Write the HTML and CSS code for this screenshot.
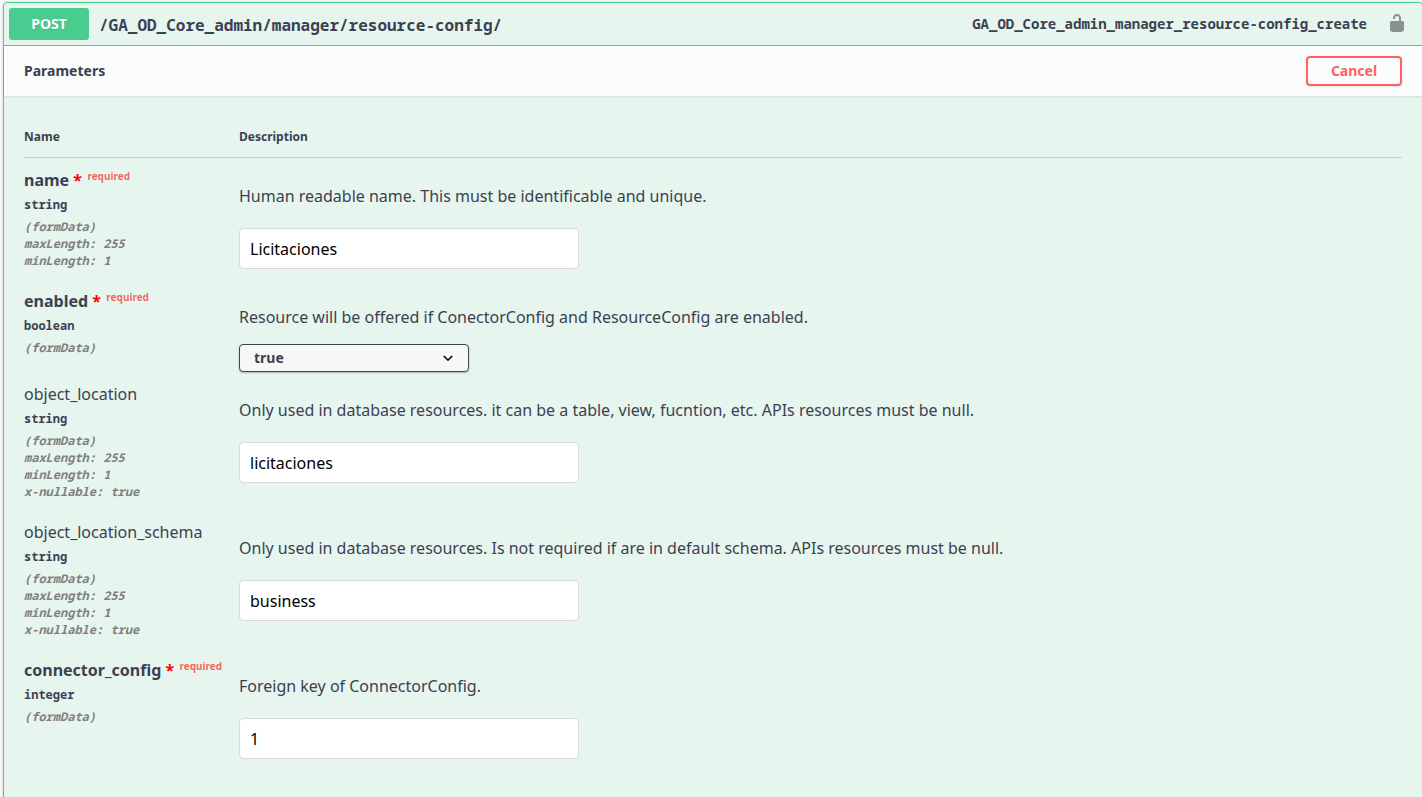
FILE: index.html
```html
<!DOCTYPE html>
<html lang="en">
<head>
<meta charset="utf-8">
<title>API operation</title>
<link rel="stylesheet" href="styles.css">
</head>
<body>
<main class="opblock">
  <header class="summary">
    <span class="method">POST</span>
    <span class="path">/GA_OD_Core_admin/manager/resource-config/</span>
    <span class="operation-id">GA_OD_Core_admin_manager_resource-config_create</span>
    <svg class="lock" viewBox="0 0 20 20" width="20" height="20"><path d="M15.8 8H14V5.6C14 2.703 12.665 1 10 1 7.334 1 6 2.703 6 5.6V6h2v-.801C8 3.754 8.797 3 10 3c1.203 0 2 .754 2 2.199V8H4c-.553 0-1 .646-1 1.199V17c0 .549.428 1.139.951 1.307l1.197.387C5.672 18.861 6.55 19 7.1 19h5.8c.549 0 1.428-.139 1.951-.307l1.196-.387c.524-.167.953-.757.953-1.306V9.199C17 8.646 16.352 8 15.8 8z"/></svg>
  </header>
  <div class="section-header">
    <h4 class="section-title">Parameters</h4>
    <button class="cancel">Cancel</button>
  </div>
  <section class="parameters">
    <div class="table-head"><span>Name</span><span>Description</span></div>

    <div class="row">
      <div class="meta">
        <div class="name required">name <span class="star">*</span><span class="flag">required</span></div>
        <div class="type">string</div>
        <div class="detail">(formData)</div>
        <div class="detail">maxLength: 255</div>
        <div class="detail">minLength: 1</div>
      </div>
      <div class="description">
        <p class="text">Human readable name. This must be identificable and unique.</p>
        <input class="field" type="text" value="Licitaciones">
      </div>
    </div>

    <div class="row row-select">
      <div class="meta">
        <div class="name required">enabled <span class="star">*</span><span class="flag">required</span></div>
        <div class="type">boolean</div>
        <div class="detail">(formData)</div>
      </div>
      <div class="description">
        <p class="text">Resource will be offered if ConectorConfig and ResourceConfig are enabled.</p>
        <div class="select"><span class="select-value">true</span><svg class="chevron" viewBox="0 0 20 20" width="20" height="20"><path d="M13.418 7.859a.695.695 0 0 1 .978 0 .68.68 0 0 1 0 .969l-3.908 3.83a.697.697 0 0 1-.979 0l-3.908-3.83a.68.68 0 0 1 0-.969.695.695 0 0 1 .978 0L10 11l3.418-3.141z"/></svg></div>
      </div>
    </div>

    <div class="row row-tall">
      <div class="meta">
        <div class="name">object_location</div>
        <div class="type">string</div>
        <div class="detail">(formData)</div>
        <div class="detail">maxLength: 255</div>
        <div class="detail">minLength: 1</div>
        <div class="detail">x-nullable: true</div>
      </div>
      <div class="description">
        <p class="text">Only used in database resources. it can be a table, view, fucntion, etc. APIs resources must be null.</p>
        <input class="field" type="text" value="licitaciones">
      </div>
    </div>

    <div class="row row-tall">
      <div class="meta">
        <div class="name">object_location_schema</div>
        <div class="type">string</div>
        <div class="detail">(formData)</div>
        <div class="detail">maxLength: 255</div>
        <div class="detail">minLength: 1</div>
        <div class="detail">x-nullable: true</div>
      </div>
      <div class="description">
        <p class="text">Only used in database resources. Is not required if are in default schema. APIs resources must be null.</p>
        <input class="field" type="text" value="business">
      </div>
    </div>

    <div class="row">
      <div class="meta">
        <div class="name required">connector_config <span class="star">*</span><span class="flag">required</span></div>
        <div class="type">integer</div>
        <div class="detail">(formData)</div>
      </div>
      <div class="description">
        <p class="text">Foreign key of ConnectorConfig.</p>
        <input class="field" type="text" value="1">
      </div>
    </div>
  </section>
</main>
</body>
</html>
```
FILE: styles.css
```css
*, *::before, *::after { box-sizing: border-box; }
html { height: 100%; overflow: hidden; }
body {
  margin: 0;
  height: 797px;
  padding: 2px 0 0 3px;
  overflow: hidden;
  background: #fafafa;
  color: #3b4151;
  font-family: "Noto Sans", "Open Sans", sans-serif;
}
.opblock {
  width: 1420px;
  height: 820px;
  border: 1px solid #49cc90;
  border-radius: 4px;
  background: rgba(73, 204, 144, .1);
  box-shadow: 0 0 3px rgba(0, 0, 0, .19);
}
.summary {
  display: flex;
  align-items: center;
  height: 43px;
  padding: 5px 15px 5px 5px;
  border-bottom: 1px solid #49cc90;
}
.method {
  width: 80px;
  height: 32px;
  border-radius: 3px;
  background: #49cc90;
  color: #fff;
  font-size: 14px;
  font-weight: 700;
  line-height: 31px;
  text-align: center;
  text-shadow: 0 1px 0 rgba(0, 0, 0, .1);
}
.path, .operation-id, .type, .detail {
  font-family: "Noto Sans Mono", "DejaVu Sans Mono", monospace;
  font-weight: 700;
}
.path {
  flex: 1;
  padding: 2px 10px 0;
  font-size: 16px;
}
.operation-id {
  padding-bottom: 2px;
  font-size: 14px;
}
.lock {
  margin: 0 0 2px 20px;
  fill: #000;
  opacity: .4;
}
.section-header {
  display: flex;
  align-items: center;
  justify-content: space-between;
  height: 50px;
  padding: 0 20px;
  background: rgba(255, 255, 255, .8);
  box-shadow: 0 1px 2px rgba(0, 0, 0, .1);
}
.section-title {
  margin: 0;
  padding-bottom: 2px;
  font-size: 14px;
  font-weight: 700;
}
.cancel {
  width: 96px;
  height: 30px;
  padding: 0 0 1px;
  border: 2px solid #ff6060;
  border-radius: 4px;
  background: transparent;
  box-shadow: 0 1px 2px rgba(0, 0, 0, .1);
  color: #ff6060;
  font: 700 14px "Noto Sans", sans-serif;
}
.parameters { padding: 20px; }
.table-head {
  display: grid;
  grid-template-columns: 215px 1fr;
  height: 42px;
  padding-top: 12px;
  border-bottom: 1px solid rgba(59, 65, 81, .2);
  font-size: 12px;
  font-weight: 700;
  line-height: 17px;
}
.row {
  display: grid;
  grid-template-columns: 215px 1fr;
  height: 121px;
  padding-top: 10px;
}
.row-select { height: 93px; }
.row-tall { height: 138px; }
.name {
  height: 22px;
  font-size: 16px;
  line-height: 24px;
  white-space: nowrap;
}
.required { font-weight: 700; }
.star { color: #f00; }
.flag {
  margin-left: 5.4px;
  color: rgba(255, 0, 0, .6);
  font-size: 10px;
  line-height: 10px;
  vertical-align: 6px;
}
.type {
  padding: 6px 0 5px;
  font-size: 12px;
  line-height: 17px;
}
.detail {
  color: #808080;
  font-size: 12px;
  font-style: italic;
  line-height: 17px;
}
.text {
  margin: 17px 0 15px;
  font-size: 16px;
  line-height: 23px;
}
.field {
  display: block;
  width: 340px;
  height: 41px;
  margin-top: 20px;
  padding: 1px 10px 0;
  border: 1px solid #d9d9d9;
  border-radius: 4px;
  background: #fff;
  color: #000;
  font: 16px "Noto Sans", sans-serif;
}
.select {
  display: flex;
  align-items: center;
  justify-content: space-between;
  width: 230px;
  height: 28px;
  padding: 0 10px 0 14px;
  border: 1px solid #41444e;
  border-radius: 4px;
  background: #f7f7f7;
  box-shadow: 0 1px 2px rgba(0, 0, 0, .25);
  font-size: 14px;
  font-weight: 700;
}
.select-value { padding-bottom: 2px; }
.chevron { fill: #000; }
```
